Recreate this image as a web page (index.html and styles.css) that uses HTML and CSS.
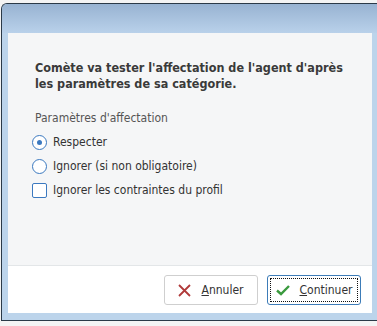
FILE: index.html
```html
<!DOCTYPE html>
<html lang="fr">
<head>
	<meta charset="UTF-8">
	<title>Affectation</title>
	<link rel="stylesheet" href="styles.css">
</head>
<body>

<div class="window">
	<div class="titlebar"></div>
	<div class="client">
		<div class="panel">
			<p class="message">Comète va tester l'affectation de l'agent d'après les paramètres de sa catégorie.</p>

			<div class="group-title">Paramètres d'affectation</div>

			<div class="option">
				<span class="radio checked"></span>
				<span>Respecter</span>
			</div>
			<div class="option">
				<span class="radio"></span>
				<span>Ignorer (si non obligatoire)</span>
			</div>
			<div class="option">
				<span class="check"></span>
				<span>Ignorer les contraintes du profil</span>
			</div>
		</div>

		<div class="footer">
			<button class="btn">
				<svg width="13" height="13" viewBox="0 0 13 13"><path d="M1 1 L12 12 M12 1 L1 12" stroke="#b03a3a" stroke-width="1.8" fill="none"/></svg>
				<span><u>A</u>nnuler</span>
			</button>
			<button class="btn default">
				<span class="focus">
					<svg width="14" height="12" viewBox="0 0 14 12"><path d="M1 6.5 L5 10 L13 2" stroke="#3a9a3e" stroke-width="2.4" fill="none"/></svg>
					<span><u>C</u>ontinuer</span>
				</span>
			</button>
		</div>
	</div>
</div>

</body>
</html>
```

FILE: styles.css
```css
html, body {
	margin: 0;
	padding: 0;
}

body {
	background-color: #f4f4f4;
	padding: 3px 0 0 1px;
	font-family: "DejaVu Sans Condensed", "DejaVu Sans", sans-serif;
	font-size: 12px;
	color: #333;
}

.window {
	border-top: 1px solid #2b3a48;
	border-left: 1px solid #2b3a48;
	border-bottom: 1px solid #2b3a48;
	border-top-left-radius: 6px;
	background-color: #bcd4eb;
	padding: 0 5px 7px 6px;
}

.titlebar {
	height: 29px;
	margin: 0 -5px 0 -6px;
	background: linear-gradient(#98b3d2, #b9d1ea);
	border-top-left-radius: 5px;
}

.client {
	background-color: #fff;
}

.panel {
	background-color: #f5f6f7;
	border-bottom: 1px solid #e3e6e8;
	height: 233px;
	padding: 0 0 0 27px;
	box-sizing: border-box;
	overflow: hidden;
}

.message {
	margin: 0;
	padding-top: 27px;
	width: 318px;
	font-weight: bold;
	font-size: 12.5px;
	line-height: 16px;
	color: #3a3a3a;
}

.group-title {
	margin-top: 18px;
	color: #555;
	line-height: 16px;
	margin-bottom: 4px;
}

.option {
	display: flex;
	align-items: center;
	gap: 6px;
	height: 24px;
	margin-left: -3px;
	color: #333;
}

.radio {
	width: 13px;
	height: 13px;
	border: 1px solid #3b79c0;
	border-radius: 50%;
	background-color: #fff;
	box-sizing: content-box;
	display: flex;
	align-items: center;
	justify-content: center;
}

.radio.checked::after {
	content: "";
	width: 5px;
	height: 5px;
	border-radius: 50%;
	background-color: #3b79c0;
}

.check {
	width: 13px;
	height: 13px;
	border: 1px solid #3b79c0;
	border-radius: 2px;
	background-color: #fff;
}

.footer {
	display: flex;
	justify-content: flex-end;
	gap: 9px;
	padding: 9px 11px 8px 0;
}

.btn {
	width: 94px;
	height: 30px;
	border: 1px solid #cfcfcf;
	border-radius: 3px;
	background-color: #fff;
	font-family: inherit;
	font-size: 12px;
	color: #333;
	display: flex;
	align-items: center;
	justify-content: center;
	gap: 10px;
	padding: 0;
}

.btn.default {
	border-color: #3d7cb8;
	padding: 2px;
}

.focus {
	flex: 1;
	align-self: stretch;
	border: 1px dotted #111;
	display: flex;
	align-items: center;
	justify-content: center;
	gap: 10px;
}
```
